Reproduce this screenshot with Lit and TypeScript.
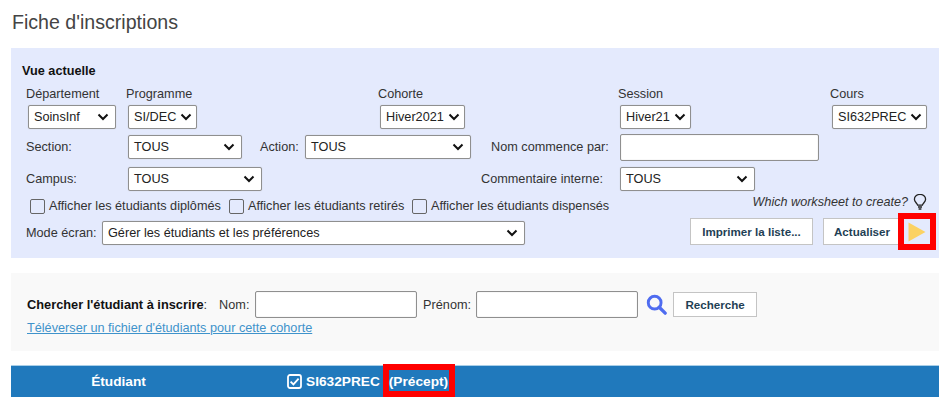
import { LitElement, html, css, svg } from "lit";
import { customElement } from "lit/decorators.js";

const chevron = svg`<svg class="chev" width="12" height="8" viewBox="0 0 12 8"><path d="M1.5 1.5 6 6l4.5-4.5" fill="none" stroke="#111" stroke-width="2"/></svg>`;

@customElement("app-root")
export class AppRoot extends LitElement {
  static styles = css`
    :host { display: block; width: 948px; height: 413px; overflow: hidden; background: #fff; font-family: "Liberation Sans", Arial, sans-serif; font-size: 12.7px; color: #333; }
    * { box-sizing: border-box; }
    h1 { margin: 0; padding: 11px 0 0 12px; height: 48px; font-size: 19.6px; line-height: 22px; font-weight: 400; color: #444; }
    .panel { margin: 0 9px 0 11px; background: #e4eafd; height: 210px; padding: 15px 0 0 11px; }
    .title { font-weight: 700; font-size: 12.7px; line-height: 16px; color: #111; }
    .cols { display: grid; grid-template-columns: 100px 252px 240px 212px 95px; margin: 0 0 0 4px; padding-top: 7px; }
    .cols label { display: block; line-height: 16px; height: 19px; }
    .sel { display: flex; align-items: center; justify-content: space-between; height: 24px; padding: 0 6px 0 5px; background: #fff; border: 1px solid #8f8f8f; border-radius: 2px; color: #222; font-size: 12.7px; white-space: nowrap; box-shadow: 0 0 1px #bbb; }
    .cols .sel { margin-left: 2px; }
    .chev { flex: none; margin-left: 4px; }
    .row { display: flex; align-items: center; margin-left: 4px; }
    .r2 { height: 24px; margin-top: 6px; }
    .r3 { height: 24px; margin-top: 8px; }
    .lab { flex: none; }
    .w102 { width: 102px; }
    input.text { height: 27px; background: #fff; border: 1px solid #8f8f8f; border-radius: 2px; box-shadow: inset 0 0 1px #bbb; padding: 0; }
    .checks { height: 22px; margin-top: 1px; padding-top: 6px; margin-left: 0; padding-right: 12px; }
    .ck { display: flex; align-items: center; gap: 4px; }
    .box { display: block; width: 15px; height: 15px; border: 1.5px solid #666; border-radius: 2px; background: transparent; margin: 1px 0 0 0; }
    .worksheet { margin-left: auto; display: flex; align-items: center; gap: 5px; font-style: italic; font-size: 12.6px; color: #333; margin-top: -8px; }
    .r5 { height: 37px; margin-top: -1px; }
    .r5 .sel { margin-top: 3px; }
    .r5 .lab { margin-top: 3px; }
    .btn { height: 27px; display: flex; align-items: center; justify-content: center; background: #fff; border: 1px solid #c4c4c4; font-weight: 700; font-size: 11.6px; font-family: inherit; color: #1f3f55; padding: 0; }
    .red { border: 6px solid #f00; display: flex; align-items: center; justify-content: center; }
    .play { flex: none; width: 38px; height: 37px; margin-left: -3px; }
    .search { margin: 15px 9px 0 11px; height: 78px; background: #f9f9f9; padding: 18px 0 0 16px; }
    .search .row { margin: 0; gap: 0; }
    .strong { font-weight: 700; color: #111; font-size: 12.8px; }
    a { display: block; margin-top: 2px; color: #3f93cb; font-size: 12.7px; line-height: 16px; text-decoration: underline; }
    .thead { margin: 14px 9px 0 11px; height: 32px; background: #2079bc; border-top: 1px solid #a9cfe8; display: flex; align-items: center; color: #fff; font-weight: 700; font-size: 13.7px; }
    .stu { width: 215px; text-align: center; }
    .wck { margin-left: 61px; display: block; }
    .code { margin-left: 4px; }
    .prec { margin-left: 3px; height: 33px; margin-top: -3px; width: 72px; padding: 2px 0 0; white-space: nowrap; background: #2079bc; justify-content: flex-start; }
  `;

  private sel(text: string, width: number) {
    return html`<div class="sel" style="width:${width}px"><span>${text}</span>${chevron}</div>`;
  }

  render() {
    return html`
      <h1>Fiche d'inscriptions</h1>
      <section class="panel">
        <div class="title">Vue actuelle</div>
        <div class="cols">
          <div><label>Département</label>${this.sel("SoinsInf", 88)}</div>
          <div><label>Programme</label>${this.sel("SI/DEC", 69)}</div>
          <div><label>Cohorte</label>${this.sel("Hiver2021", 85)}</div>
          <div><label>Session</label>${this.sel("Hiver21", 71)}</div>
          <div><label>Cours</label>${this.sel("SI632PREC", 95)}</div>
        </div>
        <div class="row r2">
          <span class="lab w102">Section:</span>
          ${this.sel("TOUS", 114)}
          <span class="lab" style="margin-left:18px;width:45px">Action:</span>
          ${this.sel("TOUS", 166)}
          <span class="lab" style="margin-left:20px;width:129px">Nom commence par:</span>
          <input class="text" style="width:199px" aria-label="Nom commence par" />
        </div>
        <div class="row r3">
          <span class="lab w102">Campus:</span>
          ${this.sel("TOUS", 134)}
          <span class="lab" style="margin-left:219px;width:139px">Commentaire interne:</span>
          ${this.sel("TOUS", 135)}
        </div>
        <div class="row checks">
          <span class="ck" style="margin-left:8px;width:199px"><span class="box"></span>Afficher les étudiants diplômés</span>
          <span class="ck" style="width:183px"><span class="box"></span>Afficher les étudiants retirés</span>
          <span class="ck"><span class="box"></span>Afficher les étudiants dispensés</span>
          <span class="worksheet">Which worksheet to create?
            <svg width="14" height="17" viewBox="0 0 14 17"><path d="M4.6 11.2C4.4 9.4 1.4 8 1.4 5.2A5.6 4.8 0 0 1 12.6 5.2C12.6 8 9.6 9.4 9.4 11.2Z" fill="none" stroke="#222" stroke-width="1.3"/><path d="M5 13h4M5.6 15h2.8" stroke="#222" stroke-width="1.3"/></svg>
          </span>
        </div>
        <div class="row r5">
          <span class="lab" style="width:76px">Mode écran:</span>
          ${this.sel("Gérer les étudiants et les préférences", 423)}
          <button class="btn" style="margin-left:165px;width:123px">Imprimer la liste...</button>
          <button class="btn" style="margin-left:10px;width:78px">Actualiser</button>
          <div class="red play">
            <svg width="18" height="20" viewBox="0 0 18 20"><path d="M0.5 0.5 17.5 10 0.5 19.5Z" fill="#fbd264"/></svg>
          </div>
        </div>
      </section>
      <section class="search">
        <div class="row">
          <span class="lab strong">Chercher l'étudiant à inscrire</span><span class="lab">:</span>
          <span class="lab" style="margin-left:12px;width:36px">Nom:</span>
          <input class="text" style="width:162px" aria-label="Nom" />
          <span class="lab" style="margin-left:6px;width:53px">Prénom:</span>
          <input class="text" style="width:162px" aria-label="Prénom" />
          <svg style="margin-left:8px;flex:none" width="21" height="21" viewBox="0 0 23 23"><circle cx="9.5" cy="9.5" r="7" fill="none" stroke="#4f6cf0" stroke-width="3.2"/><path d="M14.5 14.5 21 21" stroke="#4f6cf0" stroke-width="3.6" stroke-linecap="round"/></svg>
          <button class="btn" style="margin-left:6px;width:84px;height:25px">Recherche</button>
        </div>
        <a href="#">Téléverser un fichier d'étudiants pour cette cohorte</a>
      </section>
      <section class="thead">
        <span class="stu">Étudiant</span>
        <svg class="wck" width="15" height="15" viewBox="0 0 15 15"><rect x="1" y="1" width="13" height="13" rx="2" fill="none" stroke="#fff" stroke-width="1.8"/><path d="M3.6 7.6 6.4 10.4 11.6 4.6" fill="none" stroke="#fff" stroke-width="1.8"/></svg>
        <span class="code">SI632PREC</span>
        <span class="red prec">(Précept)</span>
      </section>
    `;
  }
}
